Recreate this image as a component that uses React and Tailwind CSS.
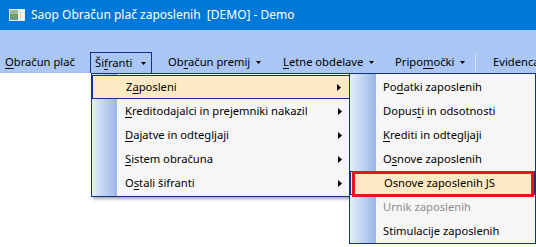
import React from "react";

const font = { fontFamily: '"Noto Sans", "Open Sans", sans-serif' };

const Arrow = () => (
  <svg width="5" height="3" viewBox="0 0 5 3" className="ml-[6px] shrink-0">
    <polygon points="0,0 5,0 2.5,3" fill="#000" />
  </svg>
);

const SubArrow = () => (
  <svg width="4" height="7" viewBox="0 0 4 7" className="shrink-0">
    <polygon points="0,0 4,3.5 0,7" fill="#000" />
  </svg>
);

const U = ({ children }) => <span className="underline underline-offset-2">{children}</span>;

const AppIcon = () => (
  <svg width="16" height="12" viewBox="0 0 16 12">
    <rect x="0" y="0" width="16" height="12" fill="#e8ece8" />
    <rect x="1" y="1" width="8" height="10" fill="#6f9a7a" />
    <rect x="1" y="1" width="8" height="4" fill="#9fb8a4" />
    <rect x="10" y="1" width="5" height="10" fill="#f4f6f4" />
    <rect x="11" y="2" width="1" height="8" fill="#c8d0c8" />
  </svg>
);

const MenuItem = ({ children, active, disabled, arrow }) => (
  <div
    className={
      "flex items-center h-[24px] pl-[33px] pr-[8px] whitespace-nowrap " +
      (active ? "bg-[#fde9c3] border border-[#10318c] pl-[32px] pr-[7px]" : "") +
      (disabled ? " text-[#8d8d8d]" : " text-black")
    }
  >
    <span className="flex-1">{children}</span>
    {arrow && <SubArrow />}
  </div>
);

const BarItem = ({ children, className, arrow }) => (
  <div className={"flex items-center h-[21px] whitespace-nowrap shrink-0 " + className}>
    <span>{children}</span>
    {arrow && <Arrow />}
  </div>
);

export default function App() {
  return (
    <div className="relative w-[536px] h-[247px] bg-white overflow-hidden" style={font}>
      <div className="h-[30px] bg-[#0078d7] flex items-center pl-[9px] text-[12px]">
        <AppIcon />
        <span className="ml-[6px] text-white whitespace-pre">Saop Obračun plač zaposlenih  [DEMO] - Demo</span>
      </div>

      <div className="h-[43px] bg-[#a9c6f5] flex items-end text-[11.2px] text-black">
        <BarItem className="w-[90px] pl-[5px]">
          <U>O</U>bračun plač
        </BarItem>
        <BarItem className="w-[62px] pl-[4px] border border-b-0 border-[#10318c]" arrow>
          Ši<U>f</U>ranti<span className="inline-block w-[3px]" />
        </BarItem>
        <BarItem className="w-[115px] pl-[16px]" arrow>
          Ob<U>r</U>ačun premij
        </BarItem>
        <BarItem className="w-[112px] pl-[16px]" arrow>
          <U>L</U>etne obdelave
        </BarItem>
        <BarItem className="w-[96px] pl-[16px]" arrow>
          Pripo<U>m</U>očki
        </BarItem>
        <div className="h-[21px] flex items-center">
          <div className="w-px h-[17px] bg-[#d6e3f8]" />
        </div>
        <BarItem className="pl-[17px]">Evidenca</BarItem>
      </div>

      <div className="absolute left-[91px] top-[73px] w-[260px] h-[124px] border border-[#10318c] bg-[#f6f6f6] text-[11.2px] shadow-[2px_2px_3px_rgba(0,0,0,0.35)]">
        <div className="absolute left-0 top-0 bottom-0 w-[25px] bg-linear-to-r from-[#e6eefb] to-[#9ab6e8]" />
        <div className="relative pt-px">
          <MenuItem active arrow>Z<U>a</U>posleni</MenuItem>
          <MenuItem arrow><U>K</U>reditodajalci in prejemniki nakazil</MenuItem>
          <MenuItem arrow><U>D</U>ajatve in odtegljaji</MenuItem>
          <MenuItem arrow><U>S</U>istem obračuna</MenuItem>
          <MenuItem arrow>O<U>s</U>tali šifranti</MenuItem>
        </div>
      </div>

      <div className="absolute left-[349px] top-[73px] w-[187px] h-[171px] border border-[#10318c] bg-[#f6f6f6] text-[11.2px]">
        <div className="absolute left-0 top-0 bottom-0 w-[26px] bg-linear-to-r from-[#e6eefb] to-[#9ab6e8]" />
        <div className="relative pt-px">
          <MenuItem>Po<U>d</U>atki zaposlenih</MenuItem>
          <MenuItem>Dopus<U>t</U>i in odsotnosti</MenuItem>
          <MenuItem><U>K</U>rediti in odtegljaji</MenuItem>
          <MenuItem>O<U>s</U>nove zaposlenih</MenuItem>
          <MenuItem active>Osnove zaposlenih JS</MenuItem>
          <MenuItem disabled>Urnik zaposlenih</MenuItem>
          <MenuItem>Stimulacije zaposlenih</MenuItem>
        </div>
        <div className="absolute left-[2px] top-[97px] w-[182px] h-[26px] border-[3px] border-[#e8141c]" />
      </div>
    </div>
  );
}
